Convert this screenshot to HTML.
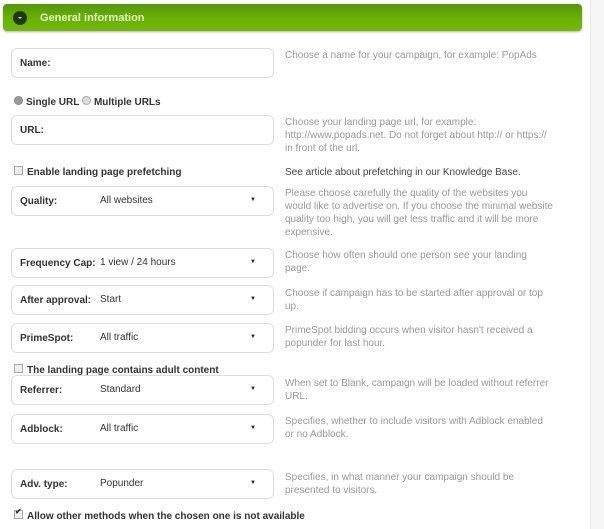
<!DOCTYPE html>
<html><head><meta charset="utf-8"><style>
body{margin:0;width:604px;height:529px;background:#fff;position:relative;overflow:hidden;font-family:"Liberation Sans",Arial,sans-serif;}
.side{position:absolute;left:590px;top:0;width:14px;height:529px;background:#f5f5f5;border-left:1px solid #ececec;}
.hdr{position:absolute;left:3px;top:4px;width:579px;height:27px;border-radius:4px;background:linear-gradient(#55950a,#68b204 55%,#72b80c);box-shadow:0 1px 2px rgba(0,0,0,.3);}
.hdr .c{position:absolute;left:10px;top:7px;width:14px;height:14px;border-radius:50%;background:#1f3a0a;}
.hdr .c:after{content:"";position:absolute;left:5px;top:6px;border-left:2px solid transparent;border-right:2px solid transparent;border-top:2px solid #cde;}
.hdr .t{position:absolute;left:37px;top:8px;color:#e6f5c8;font-weight:bold;font-size:11px;}
.box{position:absolute;left:11px;width:261px;height:28px;border:1px solid #ddd;border-radius:6px;background:#fff;}
.box .l{position:absolute;left:8px;top:9px;font-size:10px;font-weight:bold;color:#333;}
.box .v{position:absolute;left:88px;top:8px;font-size:10px;color:#333;}
.box .a{position:absolute;left:238px;top:10px;font-size:6px;color:#222;}
.h{position:absolute;left:285px;font-size:10px;line-height:13px;color:#999;white-space:nowrap;}
.cb{position:absolute;left:14px;font-size:10px;font-weight:bold;color:#333;}
.sq{display:inline-block;width:7px;height:7px;border:1px solid #aaa;background:#eee;margin-right:4px;vertical-align:0;}
.rd{display:inline-block;width:7px;height:7px;border:1px solid #aaa;border-radius:50%;background:#ddd;margin-right:3px;vertical-align:0;}
</style></head><body>
<div class="side"></div>
<div class="hdr"><div class="c"></div><div class="t">General information</div></div>

<div class="box" style="top:48px"><div class="l">Name:</div></div>
<div class="h" style="top:49px">Choose a name for your campaign, for example: PopAds</div>

<div class="cb" style="top:96px;font-weight:bold"><span class="rd" style="background:#999;border-color:#888"></span>Single URL <span class="rd"></span>Multiple URLs</div>

<div class="box" style="top:115px"><div class="l">URL:</div></div>
<div class="h" style="top:116px">Choose your landing page url, for example:<br>http://www.popads.net. Do not forget about http:// or https://<br>in front of the url.</div>

<div class="cb" style="top:166px"><span class="sq"></span>Enable landing page prefetching</div>
<div class="h" style="top:166px;color:#444">See article about prefetching in our Knowledge Base.</div>

<div class="box" style="top:186px"><div class="l">Quality:</div><div class="v">All websites</div><div class="a">▼</div></div>
<div class="h" style="top:187px">Please choose carefully the quality of the websites you<br>would like to advertise on. If you choose the minimal website<br>quality too high, you will get less traffic and it will be more<br>expensive.</div>

<div class="box" style="top:248px"><div class="l">Frequency Cap:</div><div class="v">1 view / 24 hours</div><div class="a">▼</div></div>
<div class="h" style="top:249px">Choose how often should one person see your landing<br>page.</div>

<div class="box" style="top:285px"><div class="l">After approval:</div><div class="v">Start</div><div class="a">▼</div></div>
<div class="h" style="top:287px">Choose if campaign has to be started after approval or top<br>up.</div>

<div class="box" style="top:323px"><div class="l">PrimeSpot:</div><div class="v">All traffic</div><div class="a">▼</div></div>
<div class="h" style="top:324px">PrimeSpot bidding occurs when visitor hasn't received a<br>popunder for last hour.</div>

<div class="cb" style="top:364px"><span class="sq"></span>The landing page contains adult content</div>

<div class="box" style="top:375px"><div class="l">Referrer:</div><div class="v">Standard</div><div class="a">▼</div></div>
<div class="h" style="top:377px">When set to Blank, campaign will be loaded without referrer<br>URL.</div>

<div class="box" style="top:414px"><div class="l">Adblock:</div><div class="v">All traffic</div><div class="a">▼</div></div>
<div class="h" style="top:415px">Specifies, whether to include visitors with Adblock enabled<br>or no Adblock.</div>

<div class="box" style="top:469px"><div class="l">Adv. type:</div><div class="v">Popunder</div><div class="a">▼</div></div>
<div class="h" style="top:471px">Specifies, in what manner your campaign should be<br>presented to visitors.</div>

<div class="cb" style="top:510px"><span class="sq" style="position:relative"><span style="position:absolute;left:0;top:-4px;font-size:8px">✔</span></span>Allow other methods when the chosen one is not available</div>
</body></html>
